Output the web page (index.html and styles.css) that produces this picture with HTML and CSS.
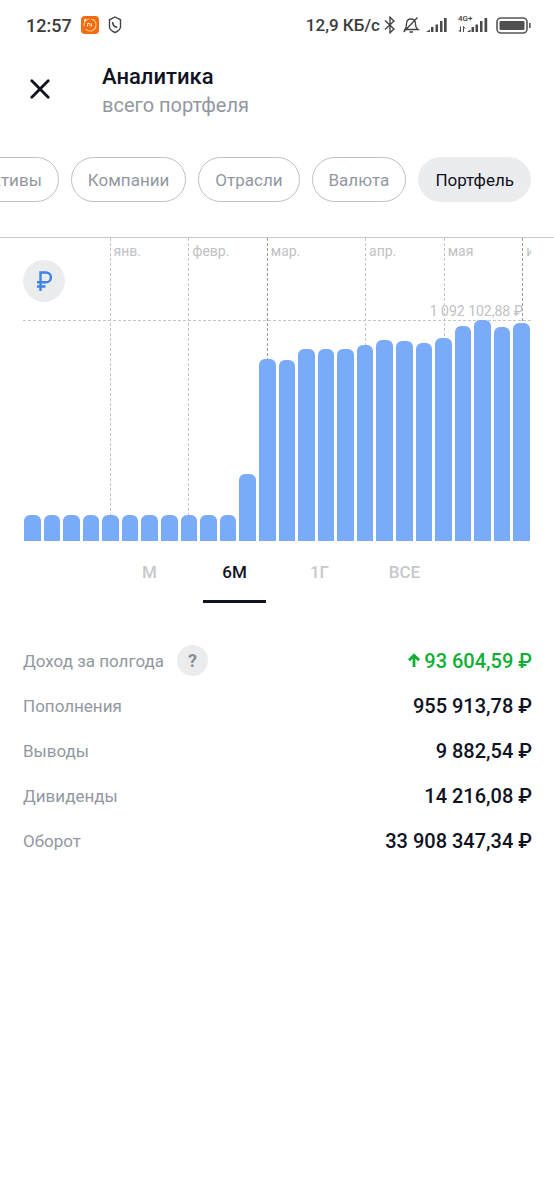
FILE: index.html
```html
<!DOCTYPE html>
<html lang="ru">
<head>
<meta charset="utf-8">
<meta name="viewport" content="width=device-width, initial-scale=1">
<title>Аналитика</title>
<link rel="stylesheet" href="styles.css">
</head>
<body>
<div class="status">
  <div class="status-side">
    <span class="clock">12:57</span>
    <svg class="app-icon" width="18" height="18" viewBox="0 0 18 18" fill="none"><rect width="18" height="18" rx="4" fill="#f26a11"/><circle cx="9" cy="9" r="6" stroke="#ffc77f" stroke-width="1.2" stroke-dasharray="14 3 10 2"/><path d="M3 5l2-2" stroke="#fff" stroke-width="1.3"/><path d="M6.500 10.500v-3H9v3M10.500 7.500v3" stroke="#ffe3bd"/></svg>
    <svg width="14" height="18" viewBox="0 0 14 18" fill="none" stroke="#444" stroke-width="1.400"><path d="M7 1l5.500 2.800v7.200c0 2-3 4.500-5.500 5.500-2.500-1-5.500-3.500-5.500-5.500V3.800z"/><path d="M4.800 6c-.2 3 1.500 5 4.500 5.300" stroke-width="1.600"/></svg>
  </div>
  <div class="status-side status-right">
    <span class="speed">12,9 КБ/с</span>
    <svg width="12" height="18" viewBox="0 0 12 18" fill="none" stroke="#444" stroke-width="1.400"><path d="M1 4.500l9 8.500-4 3.800V1.200L10 5l-9 8.500"/></svg>
    <svg class="bell" width="18" height="18" viewBox="0 0 18 18" fill="none" stroke="#444" stroke-width="1.300"><path d="M3 13.500c1.500-1.500 1.500-3 1.500-5.500 0-3.500 2-5 4.500-5s4.500 1.500 4.500 5c0 2.500.3 4 2.500 5.500zM7.500 16h3.500M1.500 16L15.500 1.500"/></svg>
    <svg width="22" height="16" viewBox="0 0 22 16" fill="#4a4a4a"><path d="M0 15l4-2.500V15zM5 10h2.500v5H5zM9.500 7.500H12V15H9.500zM14 4h2.500v11H14zM18 1h2.700v14H18z"/></svg>
    <span class="network">
      <span class="network-label">4G+</span>
      <svg width="30" height="16" viewBox="0 0 30 16" fill="#4a4a4a"><path d="M9 15l3.500-2.500V15zM13.500 10H16v5h-2.500zM17.500 7.500H20V15h-2.500zM22 4h2.500v11H22zM26.500 1h2.700v14h-2.700z"/><path d="M2.500 9.500V15L.8 13M5.500 15V9.500L7.200 11.500" fill="none" stroke="#4a4a4a"/></svg>
    </span>
    <svg width="35" height="17" viewBox="0 0 35 17"><rect x="1" y="1" width="30" height="15" rx="4" fill="none" stroke="#555" stroke-width="1.600"/><rect x="3.500" y="4" width="25" height="9" rx="1" fill="#505050"/><path d="M33.800 6v5" stroke="#555" stroke-width="1.600"/></svg>
  </div>
</div>

<header class="header">
  <button class="close" type="button" aria-label="Закрыть">
    <svg width="20" height="20" viewBox="0 0 20 20" fill="none" stroke="#10131f" stroke-width="2.800" stroke-linecap="round"><path d="M1.800 1.800l16.400 16.400M18.200 1.800L1.800 18.200"/></svg>
  </button>
  <div>
    <h1 class="title">Аналитика</h1>
    <p class="subtitle">всего портфеля</p>
  </div>
</header>

<nav class="chips" aria-label="Разделы">
  <button class="chip" type="button">Активы</button>
  <button class="chip" type="button">Компании</button>
  <button class="chip" type="button">Отрасли</button>
  <button class="chip" type="button">Валюта</button>
  <button class="chip chip-active" type="button">Портфель</button>
</nav>

<main>
  <section class="chart" aria-label="Стоимость портфеля">
    <div class="month month-jan">янв.</div>
    <div class="month month-feb">февр.</div>
    <div class="month month-mar">мар.</div>
    <div class="month month-apr">апр.</div>
    <div class="month month-may">мая</div>
    <div class="month month-jun">июн.</div>
    <div class="peak">1 092 102,88 ₽</div>
    <div class="bars">
      <div class="bar" style="height:26px"></div>
      <div class="bar" style="height:26px"></div>
      <div class="bar" style="height:26px"></div>
      <div class="bar" style="height:26px"></div>
      <div class="bar" style="height:26px"></div>
      <div class="bar" style="height:26px"></div>
      <div class="bar" style="height:26px"></div>
      <div class="bar" style="height:26px"></div>
      <div class="bar" style="height:26px"></div>
      <div class="bar" style="height:26px"></div>
      <div class="bar" style="height:26px"></div>
      <div class="bar" style="height:67px"></div>
      <div class="bar" style="height:182px"></div>
      <div class="bar" style="height:181px"></div>
      <div class="bar" style="height:192px"></div>
      <div class="bar" style="height:192px"></div>
      <div class="bar" style="height:192px"></div>
      <div class="bar" style="height:196px"></div>
      <div class="bar" style="height:201px"></div>
      <div class="bar" style="height:200px"></div>
      <div class="bar" style="height:198px"></div>
      <div class="bar" style="height:203px"></div>
      <div class="bar" style="height:215px"></div>
      <div class="bar" style="height:221px"></div>
      <div class="bar" style="height:214px"></div>
      <div class="bar" style="height:218px"></div>
    </div>
    <button class="currency" type="button" aria-label="Валюта: рубль">
      <svg width="16" height="20" viewBox="0 0 16 20" fill="none" stroke="#3f82e8" stroke-width="2.400"><path d="M4.500 20V1.500H10a4.700 4.700 0 0 1 0 9.800H1M1 15.500h8.500"/></svg>
    </button>
  </section>

  <div class="periods">
    <button class="period" type="button">М</button>
    <button class="period period-active" type="button">6М</button>
    <button class="period" type="button">1Г</button>
    <button class="period" type="button">ВСЕ</button>
  </div>

  <dl class="totals">
    <div class="row"><dt>Доход за полгода <button class="help" type="button" aria-label="Справка">?</button></dt><dd class="gain"><svg width="12" height="15" viewBox="0 0 12 15" fill="none" stroke="#0faf35" stroke-width="2.800"><path d="M6 14V2M1 7.200L6 2.200l5 5"/></svg>93 604,59 ₽</dd></div>
    <div class="row"><dt>Пополнения</dt><dd>955 913,78 ₽</dd></div>
    <div class="row"><dt>Выводы</dt><dd>9 882,54 ₽</dd></div>
    <div class="row"><dt>Дивиденды</dt><dd>14 216,08 ₽</dd></div>
    <div class="row"><dt>Оборот</dt><dd>33 908 347,34 ₽</dd></div>
  </dl>
</main>
</body>
</html>
```

FILE: styles.css
```css
* { box-sizing: border-box; }
body { margin: 0; background: #fff; color: #10131f; font-family: Roboto, "Noto Sans", sans-serif; overflow-x: hidden; }
button { margin: 0; padding: 0; border: 0; background: none; font: inherit; color: inherit; cursor: pointer; }
svg { display: block; flex: none; }

.status { display: flex; justify-content: space-between; align-items: center; height: 50px; padding: 0 23px 0 26px; color: #3c3c3c; font-weight: 500; }
.status-side { display: flex; align-items: center; gap: 9px; }
.status-right { gap: 4px; }
.clock { font-size: 18px; }
.speed { font-size: 17px; }
.bell { margin: 0 2px; }
.network { position: relative; margin: 0 4px 0 6px; }
.network-label { position: absolute; top: -2px; left: 0; font-size: 8px; line-height: 8px; }

.header { display: flex; align-items: flex-start; gap: 42px; padding: 13px 23px 0 20px; }
.close { display: grid; place-items: center; width: 40px; height: 52px; }
.title { margin: 0; font-size: 22px; line-height: 28px; font-weight: 500; }
.subtitle { margin: 0; font-size: 20px; line-height: 28px; color: #9298a0; }

.chips { display: flex; justify-content: flex-end; gap: 12px; padding: 38px 23px 35px 0; overflow: hidden; border-bottom: 1px solid #c8c9cb; }
.chip { flex: none; height: 45px; padding: 0 16px; border: 1px solid #bfc0c2; border-radius: 23px; font-size: 17px; color: #9298a0; }
.chip-active { border-color: #ebecee; background: #ebecee; color: #10131f; }

.chart { display: grid; grid-template-columns: repeat(26, 1fr); column-gap: 3px; height: 303px; margin: 0 23px; overflow: hidden; }
.month { grid-row: 1; grid-column-end: -1; margin-left: 8px; padding: 5px 0 0 3px; border-left: 1px dashed #c4c5c7; overflow: hidden; white-space: nowrap; font-size: 14px; line-height: 17px; color: #bfc1c4; }
.month-jan { grid-column-start: 5; }
.month-feb { grid-column-start: 9; }
.month-mar { grid-column-start: 13; border-color: #98999b; }
.month-apr { grid-column-start: 18; }
.month-may { grid-column-start: 22; }
.month-jun { grid-column-start: 26; border-color: #98999b; }
.peak { grid-row: 1; grid-column: 1 / -1; align-self: end; margin-bottom: 220px; padding-right: 8px; border-bottom: 1px dashed #c4c5c7; text-align: right; font-size: 14px; line-height: 17px; color: #bfc1c4; }
.bars { grid-row: 1; grid-column: 1 / -1; display: grid; grid-template-columns: repeat(26, 1fr); column-gap: 3px; align-items: end; padding: 0 1px; }
.bar { border-radius: 6px 6px 0 0; background: #7aabf9; }
.currency { grid-row: 1; grid-column: 1 / 5; align-self: start; display: grid; place-items: center; width: 42px; height: 42px; margin-top: 22px; border-radius: 50%; background: #ebecee; }

.periods { display: flex; justify-content: center; gap: 22px; }
.period { width: 63px; height: 62px; padding-top: 3px; border-bottom: 3px solid transparent; font-size: 17px; font-weight: 500; color: #c6c8cc; }
.period-active { border-color: #10131f; color: #10131f; }

.totals { margin: 0; padding: 35px 22px 0 23px; }
.row { display: flex; align-items: center; justify-content: space-between; height: 45px; }
.row dt { display: flex; align-items: center; gap: 13px; font-size: 17px; color: #9298a0; }
.row dd { display: flex; align-items: center; gap: 4px; margin: 0; font-size: 20px; font-weight: 500; }
.row .gain { color: #0faf35; }
.help { width: 31px; height: 31px; border-radius: 50%; background: #ebecee; font-size: 18px; font-weight: 700; color: #868d96; }
```
